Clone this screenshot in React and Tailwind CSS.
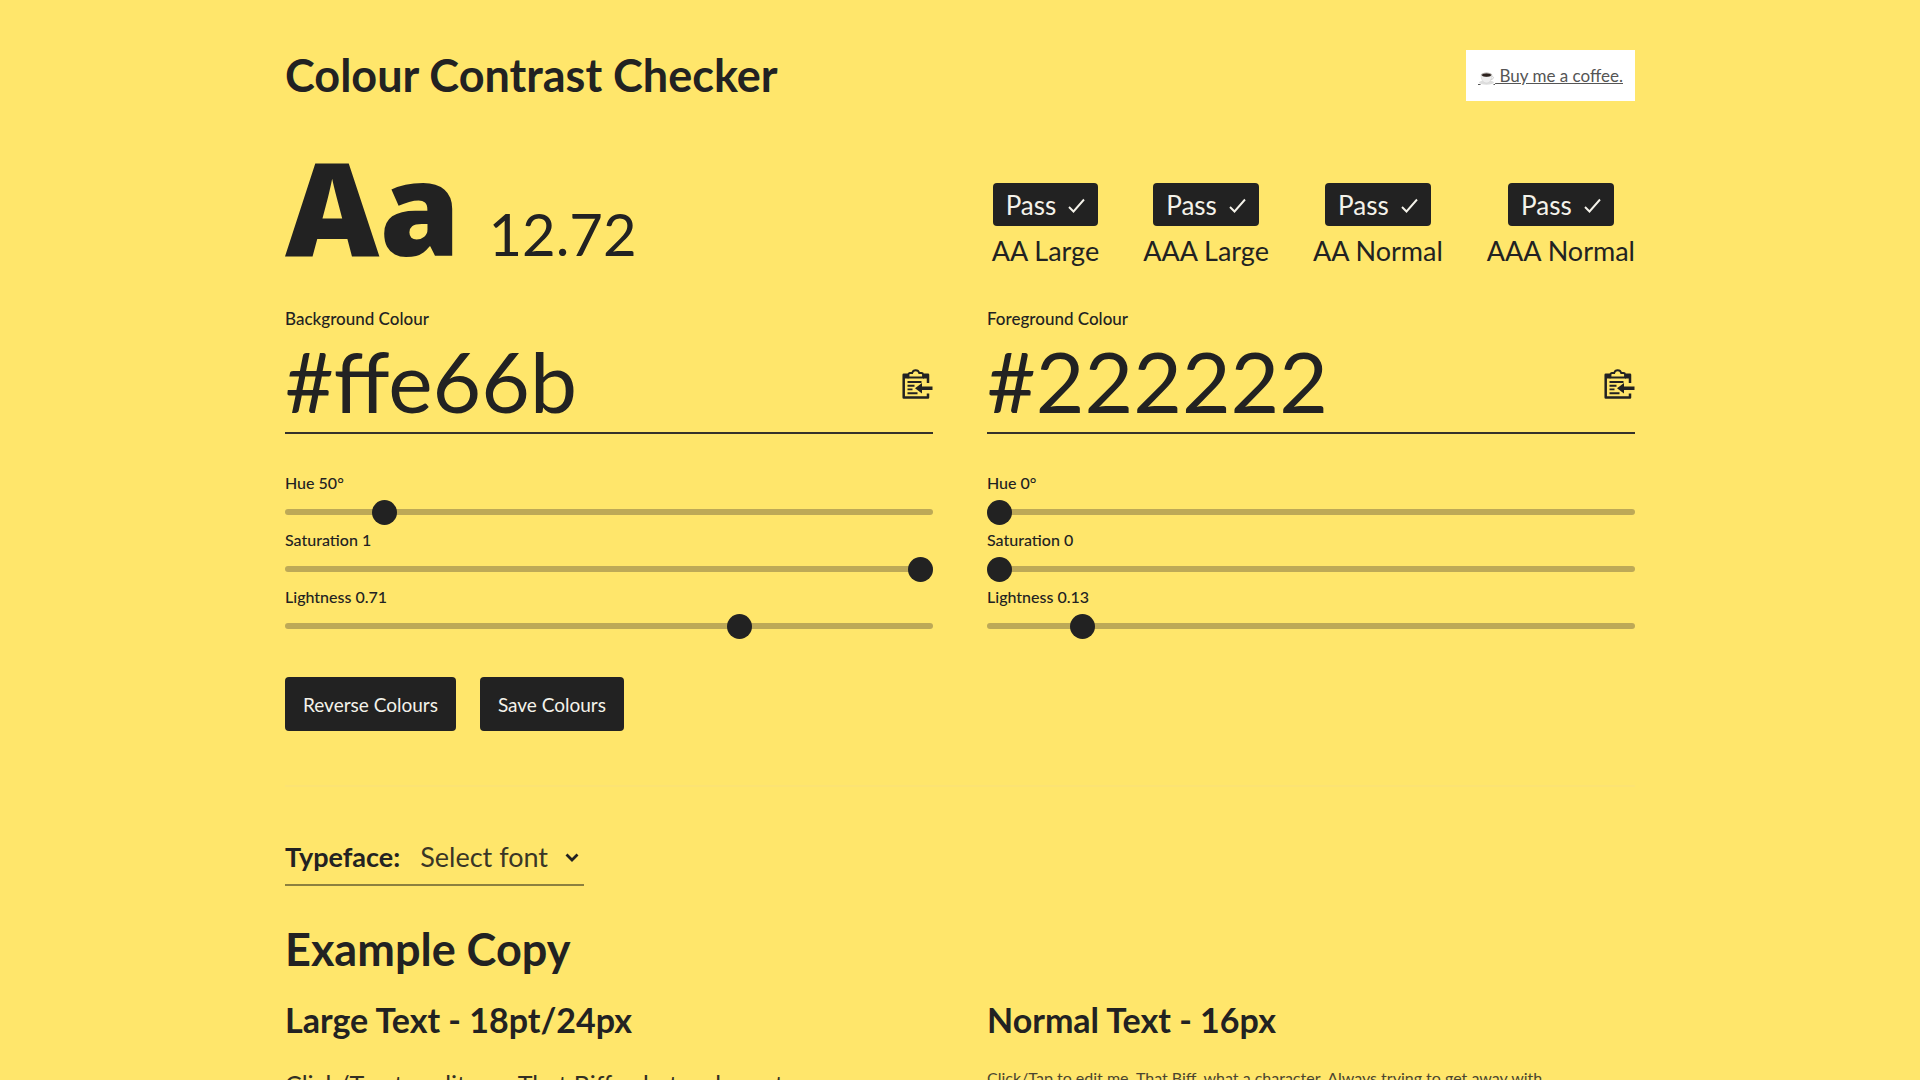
import React, { useState } from "react";

function CheckIcon() {
  return (
    <svg className="h-[15px] w-[17px]" viewBox="0 0 17 15" fill="none" stroke="currentColor" strokeWidth="1.900" aria-hidden="true">
      <path d="M1 9l4.500 4.500L16 1.500" />
    </svg>
  );
}

function PasteIcon() {
  return (
    <svg className="h-[30px] w-[31px]" viewBox="0 0 31 30" fill="none" aria-hidden="true">
      <path d="M26 14V5.800h-5M6 5.800H1.700V28.500H26V24.500" stroke="currentColor" strokeWidth="2.500" strokeLinejoin="round" />
      <path d="M6.500 8.500V5.500q0-1.500 1.500-1.500h2.200a3.600 3.600 0 0 1 7 0h2.300q1.500 0 1.500 1.500v3z" stroke="currentColor" strokeWidth="1.800" />
      <path d="M1.500 5h5v4.500h-5zM21 5h5v4.500h-5z" fill="currentColor" />
      <path d="M5.500 13h14M5.500 16.700h7M5.500 20.400h5M5.500 24.300h10" stroke="currentColor" strokeWidth="1.900" />
      <path d="M13 19.300l7-5.300v3.500h10.500v3.600H20v3.500z" fill="currentColor" />
    </svg>
  );
}

function CoffeeIcon() {
  return (
    <svg className="inline-block h-[15px] w-[17px] align-[-4px]" viewBox="0 0 17 15" aria-hidden="true">
      <ellipse cx="8.500" cy="11.500" rx="7.500" ry="2.200" fill="#dedede" />
      <path d="M3 3.500h11c0 5.500-2.200 8.500-5.500 8.500S3 9 3 3.500z" fill="#eeeeee" stroke="#cccccc" strokeWidth="0.500" />
      <path d="M13.500 5.500c3-.5 2.500 3-.8 3" fill="none" stroke="#cfcfcf" />
      <ellipse cx="8.500" cy="3.800" rx="5.500" ry="2.200" fill="#a9a5a2" />
      <ellipse cx="8.500" cy="4.100" rx="4.500" ry="1.600" fill="#2b211d" />
      <path d="M0 13.500h2.500M15.500 13.500H17" stroke="#555" />
    </svg>
  );
}

function Result({ label }) {
  return (
    <li className="flex flex-col items-center gap-2">
      <span className="flex h-[43px] items-center gap-3 rounded-[4px] bg-[#222222] px-[13px] pt-px text-[26px] leading-[42px] text-[#f4f2ea]">
        Pass
        <CheckIcon />
      </span>
      <span className="text-[27px] leading-[34px] whitespace-nowrap">{label}</span>
    </li>
  );
}

function Slider({ id, name, suffix = "", max, value, shown }) {
  const [current, setCurrent] = useState(value);
  return (
    <div className="flex flex-col gap-1">
      <label htmlFor={id} className="text-base leading-6 font-medium">
        {name} {current === value ? shown : current}
        {suffix}
      </label>
      <input
        id={id}
        type="range"
        min="0"
        max={max}
        step={max === 1 ? 0.001 : 1}
        value={current}
        onChange={(e) => setCurrent(Number(e.target.value))}
        className="h-[25px] w-full cursor-pointer appearance-none bg-transparent [&::-webkit-slider-runnable-track]:h-[6px] [&::-webkit-slider-runnable-track]:rounded-[3px] [&::-webkit-slider-runnable-track]:bg-[#bda957] [&::-webkit-slider-thumb]:mt-[-9px] [&::-webkit-slider-thumb]:h-[25px] [&::-webkit-slider-thumb]:w-[25px] [&::-webkit-slider-thumb]:appearance-none [&::-webkit-slider-thumb]:rounded-full [&::-webkit-slider-thumb]:bg-[#222222]"
      />
    </div>
  );
}

function ColourPanel({ id, title, hex, sliders }) {
  const [value, setValue] = useState(hex);
  return (
    <section className="min-w-0">
      <label htmlFor={id} className="block text-[17px] leading-6 font-medium">
        {title}
      </label>
      <div className="flex items-center border-b-2 border-[#35322a] pb-px">
        <input
          id={id}
          type="text"
          value={value}
          onChange={(e) => setValue(e.target.value)}
          className="h-[100px] min-w-0 flex-1 bg-transparent text-[84px] leading-[100px] outline-none"
        />
        <button type="button" aria-label={`Paste ${title}`} className="pt-1.5">
          <PasteIcon />
        </button>
      </div>
      <div className="mt-[37px] flex flex-col gap-1">
        {sliders.map((s) => (
          <Slider key={s.name} id={`${id}-${s.name}`} {...s} />
        ))}
      </div>
    </section>
  );
}

const results = ["AA Large", "AAA Large", "AA Normal", "AAA Normal"];

const background = [
  { name: "Hue", suffix: "°", max: 360, value: 50, shown: "50" },
  { name: "Saturation", max: 1, value: 1, shown: "1" },
  { name: "Lightness", max: 1, value: 0.71, shown: "0.71" },
];

const foreground = [
  { name: "Hue", suffix: "°", max: 360, value: 0, shown: "0" },
  { name: "Saturation", max: 1, value: 0, shown: "0" },
  { name: "Lightness", max: 1, value: 0.133, shown: "0.13" },
];

export default function App() {
  return (
    <div className="h-screen overflow-hidden bg-[#ffe66b] px-8 font-['Lato',sans-serif] text-[#222222]">
      <div className="mx-auto max-w-[1350px] pt-[50px]">
        <header className="flex items-start justify-between">
          <h1 className="text-[45px] leading-[50px] font-bold">Colour Contrast Checker</h1>
          <a href="#coffee" className="bg-white px-3 text-[17px] leading-[51px] whitespace-nowrap text-[#555555] underline">
            <CoffeeIcon /> Buy me a coffee.
          </a>
        </header>

        <main>
          <div className="mt-[42px] flex items-end justify-between">
            <div className="flex items-baseline gap-7">
              <span className="font-['Open_Sans',sans-serif] text-[130px] leading-[125px] font-extrabold">Aa</span>
              <span className="text-[58px] leading-none">12.72</span>
            </div>
            <ul className="flex gap-11">
              {results.map((label) => (
                <Result key={label} label={label} />
              ))}
            </ul>
          </div>

          <div className="mt-[39px] grid grid-cols-2 gap-[54px]">
            <ColourPanel id="background" title="Background Colour" hex="#ffe66b" sliders={background} />
            <ColourPanel id="foreground" title="Foreground Colour" hex="#222222" sliders={foreground} />
          </div>

          <div className="mt-[39px] flex gap-6">
            <button type="button" className="rounded-[4px] bg-[#222222] px-[18px] pt-px text-[19px] leading-[53px] text-[#f4f2ea]">
              Reverse Colours
            </button>
            <button type="button" className="rounded-[4px] bg-[#222222] px-[18px] pt-px text-[19px] leading-[53px] text-[#f4f2ea]">
              Save Colours
            </button>
          </div>

          <hr className="mt-[54px] border-t-2 border-[#fce373]" />

          <div className="mt-[53px] flex">
            <div className="flex items-center gap-5 border-b-2 border-[#8c803f] pb-[10px] text-[27px] leading-[34px]">
              <label htmlFor="typeface" className="font-bold">
                Typeface:
              </label>
              <div className="relative flex">
                <select id="typeface" className="h-[34px] cursor-pointer appearance-none bg-transparent pr-[36px] text-[#3a3626] outline-none">
                  <option>Select font</option>
                </select>
                <svg className="pointer-events-none absolute top-[13px] right-[5px] h-[9px] w-[14px]" viewBox="0 0 14 9" fill="none" stroke="currentColor" strokeWidth="2.800" aria-hidden="true">
                  <path d="M1.500 1.500L7 7l5.500-5.500" />
                </svg>
              </div>
            </div>
          </div>

          <h2 className="mt-9 text-[45px] leading-[54px] font-bold">Example Copy</h2>

          <div className="mt-[22px] grid grid-cols-2 gap-[54px]">
            <section>
              <h3 className="text-[34px] leading-[44px] font-bold">Large Text - 18pt/24px</h3>
              <p className="mt-6 text-[25px] leading-9 text-[#333024]">Click/Tap to edit me. That Biff, what a character.</p>
            </section>
            <section>
              <h3 className="text-[34px] leading-[44px] font-bold">Normal Text - 16px</h3>
              <p className="mt-6 text-base leading-6 text-[#4a4530]">
                Click/Tap to edit me. That Biff, what a character. Always trying to get away with
              </p>
            </section>
          </div>
        </main>
      </div>
    </div>
  );
}
